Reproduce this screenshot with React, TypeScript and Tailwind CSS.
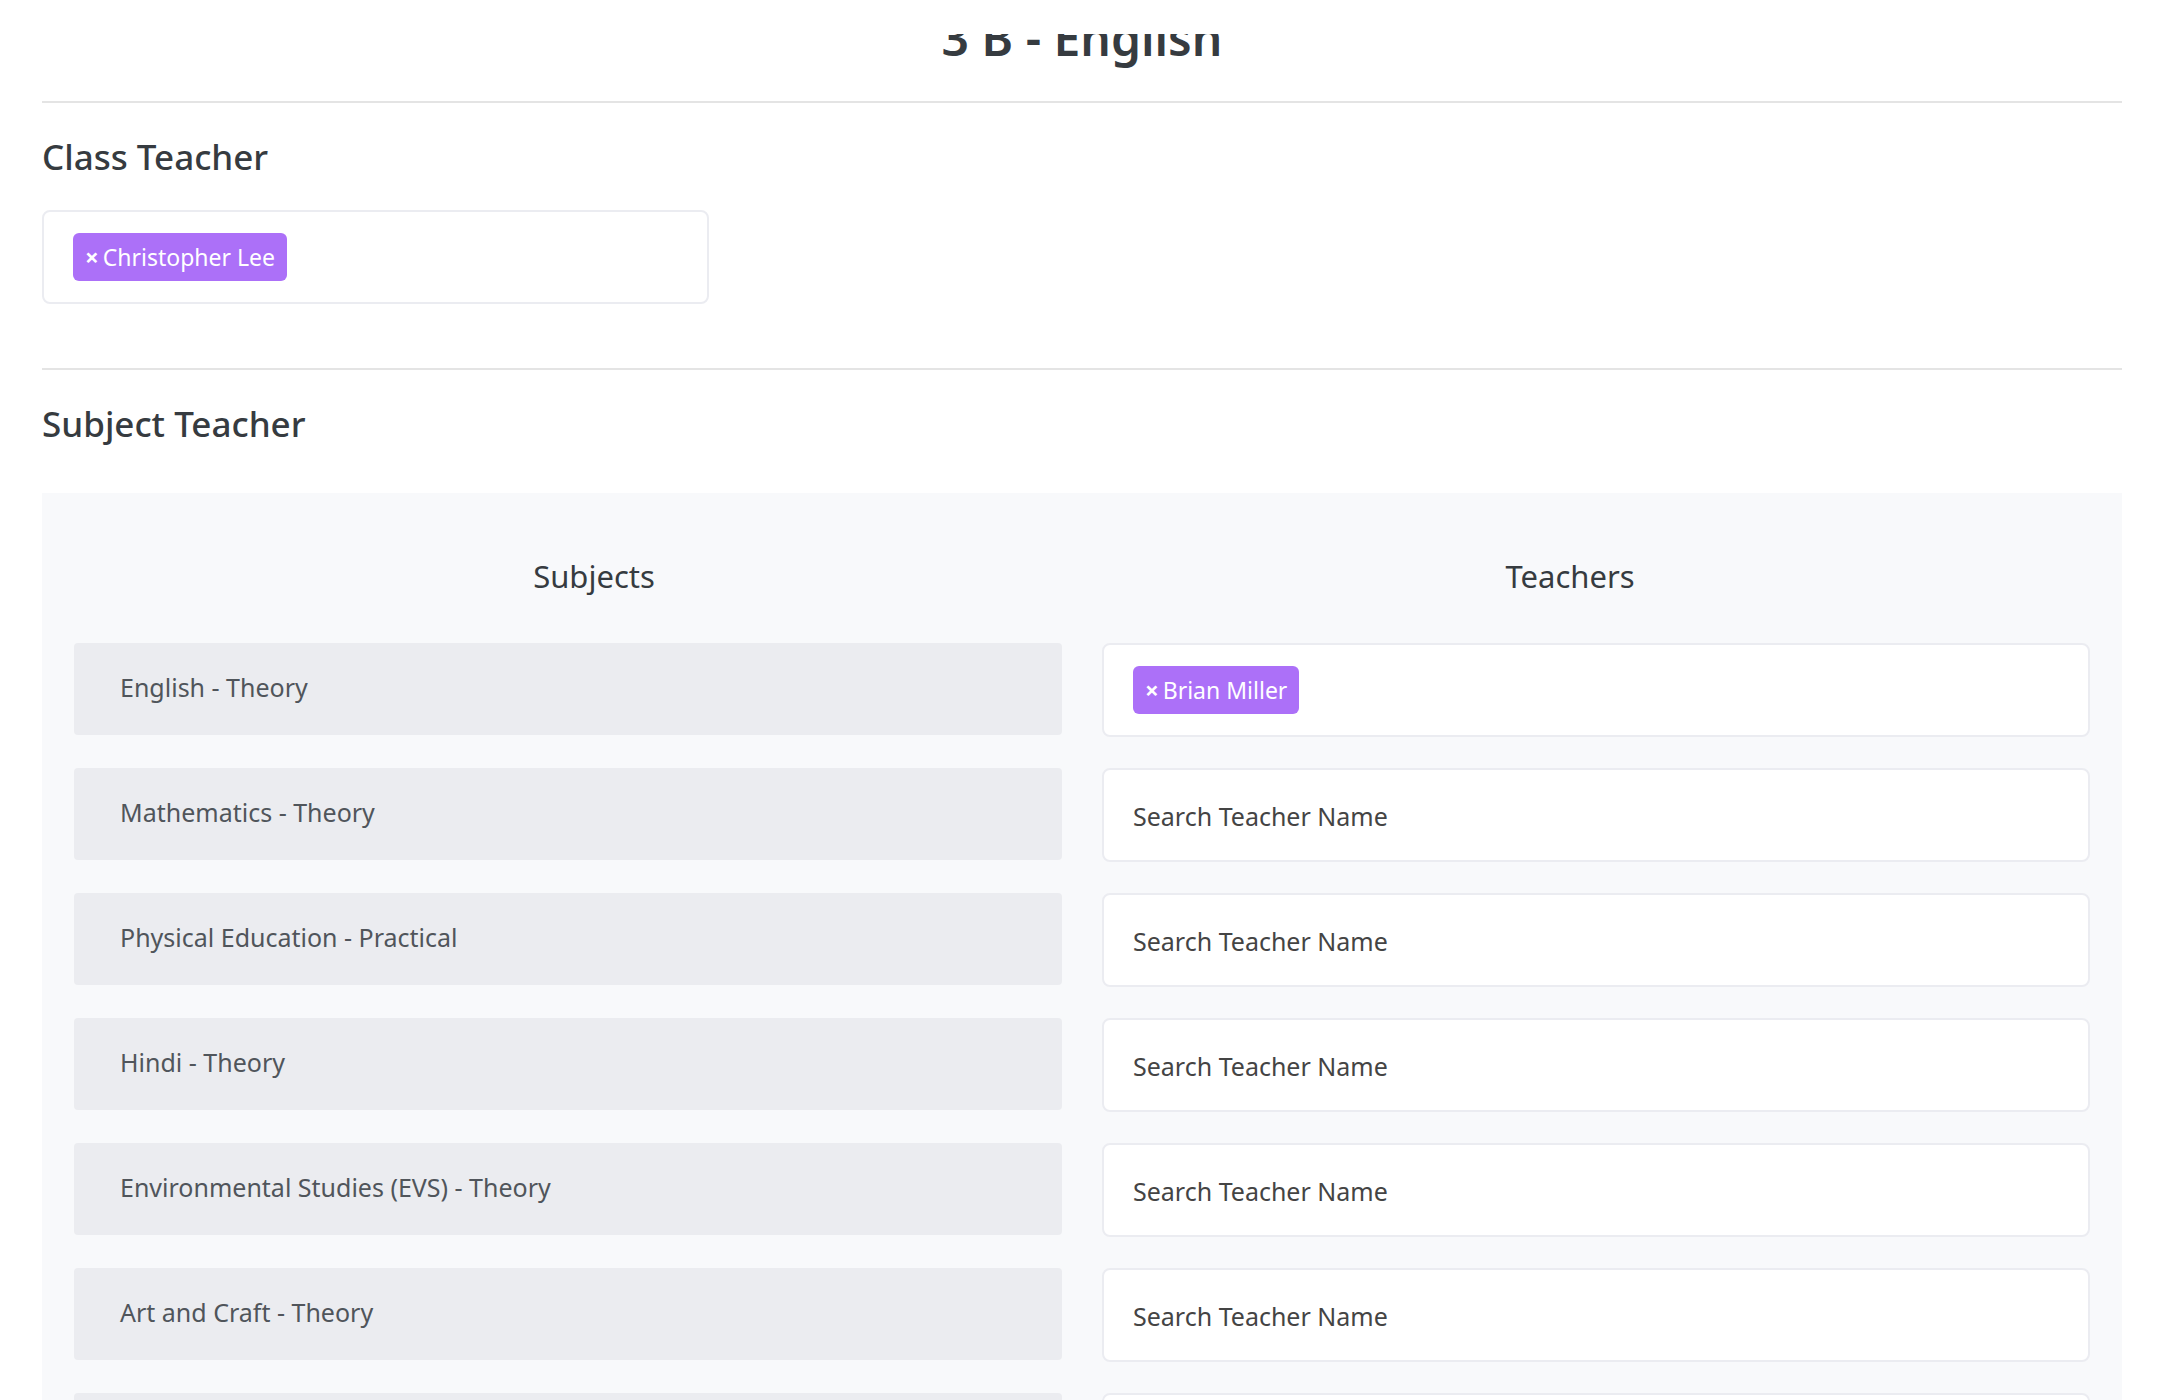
type Row = { id: string; subject: string; teacher?: string };

const rows: Row[] = [
  { id: "english", subject: "English - Theory", teacher: "Brian Miller" },
  { id: "mathematics", subject: "Mathematics - Theory" },
  { id: "physical-education", subject: "Physical Education - Practical" },
  { id: "hindi", subject: "Hindi - Theory" },
  { id: "evs", subject: "Environmental Studies (EVS) - Theory" },
  { id: "art", subject: "Art and Craft - Theory" },
  { id: "next", subject: "" },
];

function TeacherTag({ name }: { name: string }) {
  return (
    <span className="flex h-12 shrink-0 items-center gap-1 rounded-md bg-[#ac70f8] px-3 text-[23px] text-white">
      <button type="button" aria-label={"Remove " + name} className="text-2xl leading-none font-bold">
        ×
      </button>
      <span className="whitespace-nowrap">{name}</span>
    </span>
  );
}

function TeacherField({ id, teacher, label }: { id: string; teacher?: string; label?: string }) {
  return (
    <div className="flex h-[94px] w-full items-center gap-2 rounded-lg border-2 border-[#ebecf1] bg-white px-[29px]">
      {teacher && <TeacherTag name={teacher} />}
      <input
        id={id}
        type="text"
        aria-label={label}
        placeholder={teacher ? undefined : "Search Teacher Name"}
        className="h-full min-w-0 flex-1 bg-transparent pt-0.5 text-[25px] text-[#444444] outline-none placeholder:text-[#444444]"
      />
    </div>
  );
}

export default function App() {
  return (
    <div className="h-screen overflow-hidden bg-white pt-[34px] pr-14 pl-[42px] font-['Noto_Sans',sans-serif] text-[#363b40]">
      <div className="h-full overflow-hidden">
        <h1 className="-mt-[26px] text-center text-5xl leading-[60px] font-semibold">3 B - English</h1>

        <section className="mt-[33px] border-t-2 border-[#e4e4e4] pt-8">
          <h2 className="text-[35px] leading-[44px] font-medium">Class Teacher</h2>
          <div className="mt-[31px] max-w-[667px]">
            <TeacherField id="class-teacher" teacher="Christopher Lee" label="Class Teacher" />
          </div>
        </section>

        <section className="mt-16 border-t-2 border-[#e4e4e4] pt-8">
          <h2 className="text-[35px] leading-[44px] font-medium">Subject Teacher</h2>
          <div className="mt-[47px] bg-[#f8f9fb] px-8 pt-[60px]">
            <div className="grid grid-cols-2 px-8 text-center text-[31px] leading-[46px]">
              <h3>Subjects</h3>
              <h3>Teachers</h3>
            </div>
            <div className="mt-11 flex flex-col gap-[31px]">
              {rows.map((row) => (
                <div key={row.id} className="grid grid-cols-2 items-start gap-10">
                  <label
                    htmlFor={row.id}
                    className="flex h-[92px] items-center rounded bg-[#ebecf0] px-[46px] pb-0.5 text-[25px] text-[#50555b]"
                  >
                    {row.subject}
                  </label>
                  <TeacherField id={row.id} teacher={row.teacher} />
                </div>
              ))}
            </div>
          </div>
        </section>
      </div>
    </div>
  );
}
